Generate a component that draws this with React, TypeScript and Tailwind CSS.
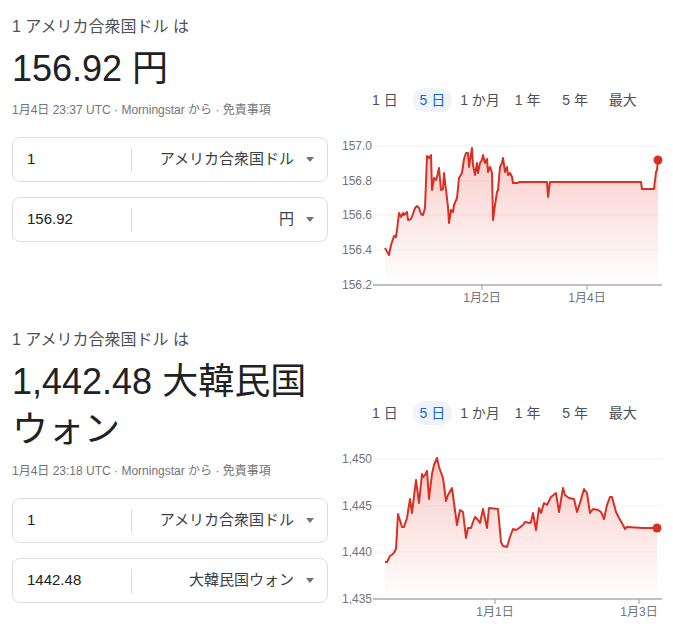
import React from "react";

const FONT = { fontFamily: '"Liberation Sans", Arial, "Noto Sans CJK JP", sans-serif' };

const chart1: [number, number][] = [
  [385, 248], [389, 255], [391, 245], [394, 236], [396, 237], [397, 230], [399, 213], [401, 217],
  [403, 213], [404, 215], [407, 212], [408, 220], [411, 219], [413, 214], [415, 208], [417, 206],
  [419, 208], [421, 214], [423, 215], [425, 208], [427, 156], [429, 158], [431, 155], [432, 190],
  [434, 178], [436, 180], [437, 177], [439, 168], [441, 190], [443, 189], [444, 173], [446, 190],
  [448, 207], [449, 223], [451, 210], [453, 212], [454, 205], [457, 198], [459, 178], [462, 173],
  [464, 159], [466, 153], [468, 153], [469, 167], [472, 148], [473, 165], [475, 175], [477, 163],
  [478, 173], [480, 163], [482, 160], [483, 155], [485, 163], [487, 159], [488, 172], [490, 167],
  [492, 173], [493, 220], [495, 205], [497, 192], [498, 190], [500, 167], [502, 163], [503, 158],
  [505, 172], [507, 167], [508, 175], [510, 173], [512, 177], [513, 183], [517, 183], [520, 182],
  [547, 182], [548, 197], [550, 182], [641, 182], [642, 189], [654, 189], [656, 172], [657, 170],
  [658, 160],
];

const chart2: [number, number][] = [
  [385, 249], [387, 249], [390, 243], [393, 241], [396, 236], [398, 201], [402, 214], [404, 214],
  [407, 205], [410, 186], [412, 200], [416, 167], [419, 190], [422, 161], [423, 164], [425, 162],
  [427, 158], [429, 186], [432, 161], [434, 152], [437, 145], [439, 154], [443, 165], [446, 188],
  [448, 182], [452, 175], [454, 190], [457, 212], [460, 197], [463, 199], [466, 225], [468, 215],
  [471, 215], [473, 209], [475, 204], [478, 207], [480, 210], [483, 196], [487, 215], [489, 195],
  [498, 196], [501, 229], [503, 233], [507, 234], [510, 224], [513, 216], [516, 217], [519, 215],
  [523, 212], [525, 209], [530, 210], [531, 209], [533, 200], [536, 217], [539, 195], [541, 200],
  [544, 190], [547, 192], [551, 184], [556, 180], [559, 199], [563, 175], [565, 182], [569, 185],
  [574, 186], [577, 199], [580, 190], [584, 176], [587, 180], [590, 200], [593, 196], [598, 197],
  [601, 199], [604, 206], [607, 192], [610, 184], [612, 184], [616, 199], [619, 205], [623, 212],
  [625, 216], [627, 214], [643, 215], [647, 215], [657, 215],
];

type ChartProps = {
  id: string;
  points: [number, number][];
  yLabels: { y: number; text: string }[];
  xLabels: { x: number; text: string }[];
  axisY: number;
};

const Chart = ({ id, points, yLabels, xLabels, axisY }: ChartProps) => {
  const line = points.map(([x, y], i) => `${i ? "L" : "M"}${x} ${y}`).join(" ");
  const first = points[0];
  const last = points[points.length - 1];
  const area = `${line} L${last[0]} ${axisY} L${first[0]} ${axisY} Z`;
  return (
    <svg width={327} height={180} viewBox="340 130 327 180" className="block">
      <defs>
        <linearGradient id={id} x1="0" y1="145" x2="0" y2={axisY} gradientUnits="userSpaceOnUse">
          <stop offset="0" stopColor="#ea4335" stopOpacity="0.28" />
          <stop offset="1" stopColor="#ea4335" stopOpacity="0" />
        </linearGradient>
      </defs>
      {yLabels.map((l) => (
        <g key={l.text}>
          {l.y < axisY - 1 && <line x1={373} x2={662} y1={l.y} y2={l.y} stroke="#f1f3f4" strokeWidth={1} />}
          <text x={372} y={l.y + 4} textAnchor="end" fontSize={12} fill="#70757a" style={FONT}>
            {l.text}
          </text>
        </g>
      ))}
      <path d={area} fill={`url(#${id})`} />
      <path d={line} fill="none" stroke="#d93025" strokeWidth={2} strokeLinejoin="round" />
      <circle cx={last[0]} cy={last[1]} r={4.5} fill="#d93025" />
      <line x1={373} x2={662} y1={axisY} y2={axisY} stroke="#bdc1c6" strokeWidth={2} />
      {xLabels.map((l) => (
        <g key={l.text}>
          <line x1={l.x} x2={l.x} y1={axisY} y2={axisY + 5} stroke="#9aa0a6" strokeWidth={1} />
          <text x={l.x} y={axisY + 17} textAnchor="middle" fontSize={12} fill="#70757a" style={FONT}>
            {l.text}
          </text>
        </g>
      ))}
    </svg>
  );
};

const tabs = ["1 日", "5 日", "1 か月", "1 年", "5 年", "最大"];

const Tabs = () => (
  <div className="ml-[21px] flex h-6 items-center">
    {tabs.map((t) => (
      <div key={t} className="flex w-[47.6px] justify-center whitespace-nowrap">
        <span
          className={
            t === "5 日"
              ? "flex h-6 items-center rounded-full bg-[#eff3fa] px-[7px] text-[14px] text-[#1967d2]"
              : "flex h-6 items-center px-[7px] text-[14px] text-[#4d5156]"
          }
        >
          {t}
        </span>
      </div>
    ))}
  </div>
);

const Field = ({ value, currency }: { value: string; currency: string }) => (
  <div className="flex h-[45px] items-center rounded-lg border border-[#dadce0]">
    <div className="w-[118px] pl-[14px] text-[15px] text-[#202124]">{value}</div>
    <div className="h-6 w-px bg-[#dadce0]" />
    <div className="flex flex-1 items-center justify-end pr-[13px] text-[15px] text-[#3c4043]">
      <span>{currency}</span>
      <span className="ml-[12px] h-0 w-0 border-x-[4.5px] border-t-[5px] border-x-transparent border-t-[#70757a]" />
    </div>
  </div>
);

type SectionProps = {
  amount: string;
  time: string;
  from: string;
  to: string;
  children: React.ReactNode;
};

const Section = ({ amount, time, from, to, children }: SectionProps) => (
  <div className="flex gap-3 pb-[3px]">
    <div className="w-[316px] shrink-0">
      <div className="mt-[15px] text-[16px] leading-6 text-[#4d5156]">1 アメリカ合衆国ドル は</div>
      <div className="mt-[6px] text-[36px] leading-[48px] text-[#202124]">{amount}</div>
      <div className="mt-[9px] text-[12px] leading-4 text-[#70757a]">
        {time} UTC · Morningstar から · 免責事項
      </div>
      <div className="mt-[19px] flex flex-col gap-[15px]">
        <Field value="1" currency="アメリカ合衆国ドル" />
        <Field value={from} currency={to} />
      </div>
    </div>
    <div className="w-[327px] shrink-0 pt-[88px]">
      <Tabs />
      <div className="mt-[18px]">{children}</div>
    </div>
  </div>
);

export default function App() {
  return (
    <div className="h-[624px] w-[673px] overflow-hidden bg-white pl-3" style={FONT}>
      <Section amount="156.92 円" time="1月4日 23:37" from="156.92" to="円">
        <Chart
          id="g1"
          points={chart1}
          axisY={285}
          yLabels={[
            { y: 146, text: "157.0" },
            { y: 181, text: "156.8" },
            { y: 215, text: "156.6" },
            { y: 250, text: "156.4" },
            { y: 285, text: "156.2" },
          ]}
          xLabels={[
            { x: 482, text: "1月2日" },
            { x: 587, text: "1月4日" },
          ]}
        />
      </Section>
      <Section amount="1,442.48 大韓民国ウォン" time="1月4日 23:18" from="1442.48" to="大韓民国ウォン">
        <Chart
          id="g2"
          points={chart2}
          axisY={286}
          yLabels={[
            { y: 146, text: "1,450" },
            { y: 193, text: "1,445" },
            { y: 239, text: "1,440" },
            { y: 286, text: "1,435" },
          ]}
          xLabels={[
            { x: 495, text: "1月1日" },
            { x: 639, text: "1月3日" },
          ]}
        />
      </Section>
    </div>
  );
}
